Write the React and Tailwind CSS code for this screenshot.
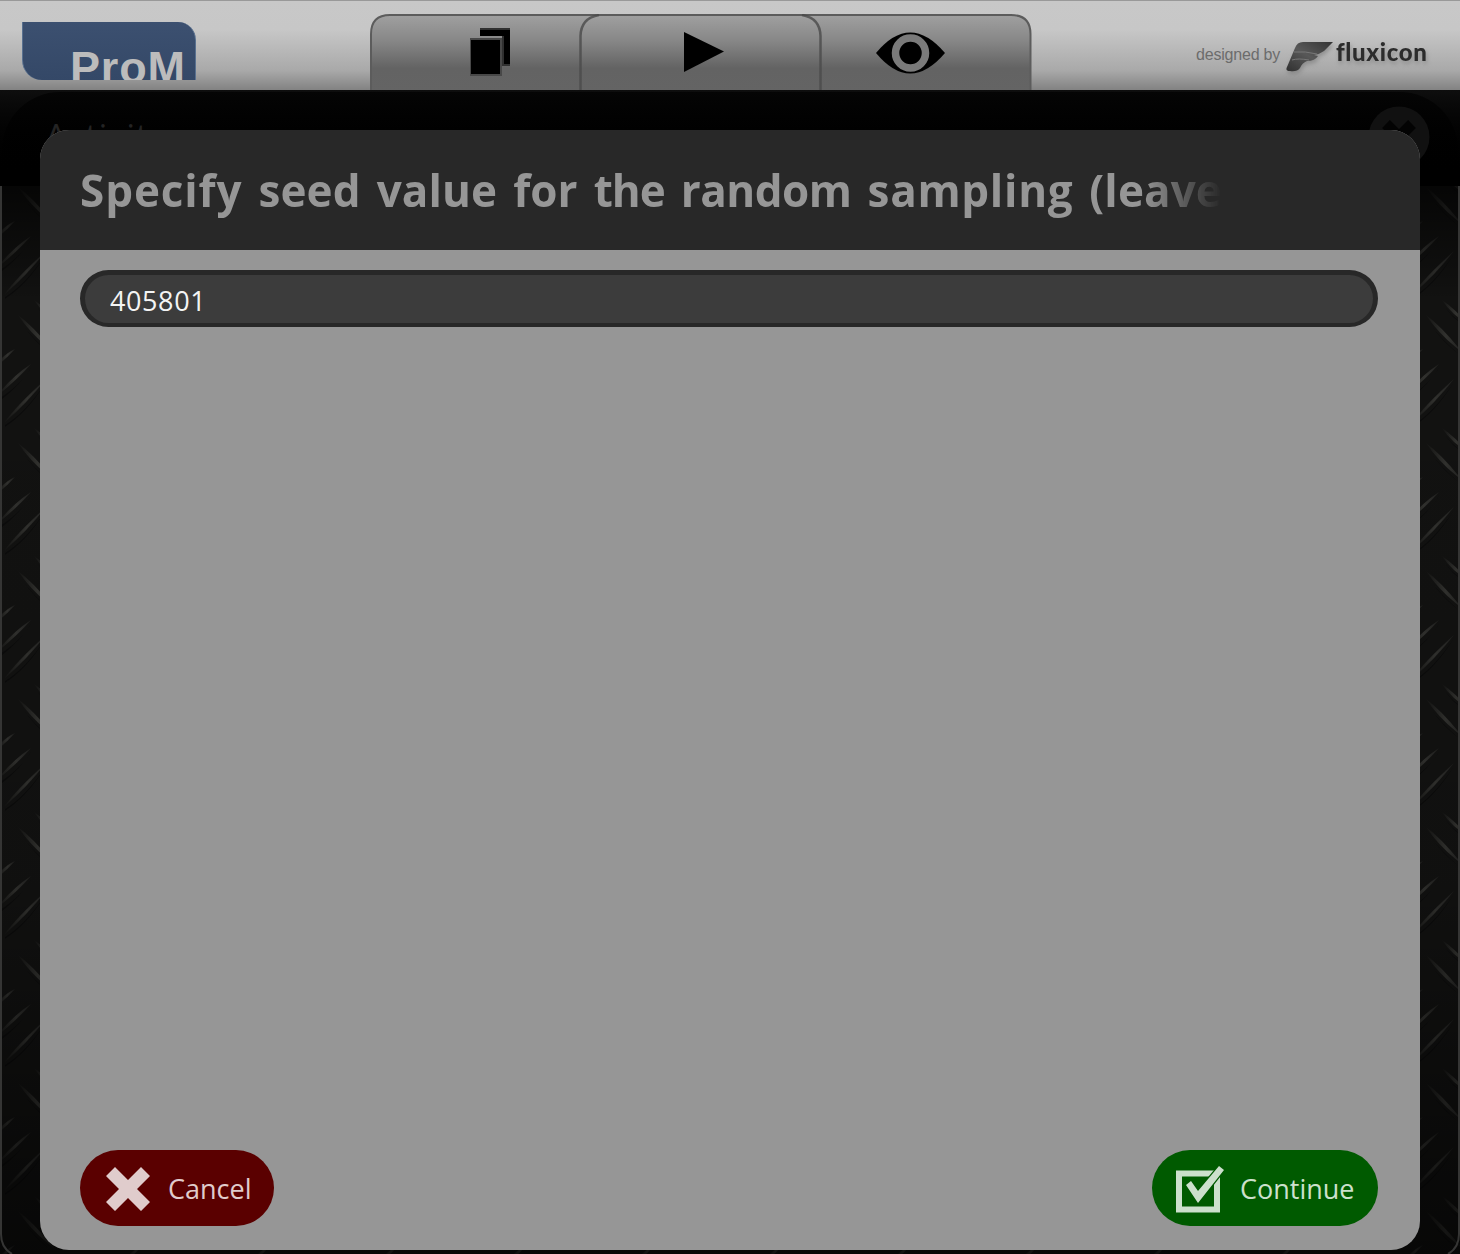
import React from "react";

const UI_FONT = "font-['Open_Sans','Noto_Sans',sans-serif]";

function TreadPlate() {
  return (
    <svg className="absolute inset-0 h-full w-full" aria-hidden="true">
      <defs>
        <linearGradient id="ridge" x1="0" y1="0" x2="1" y2="0">
          <stop offset="0" stopColor="#141413" />
          <stop offset="0.55" stopColor="#32322f" />
          <stop offset="1" stopColor="#20201f" />
        </linearGradient>
        <linearGradient id="shade" x1="0" y1="0" x2="0" y2="1">
          <stop offset="0.14" stopColor="#000" stopOpacity="0.75" />
          <stop offset="0.24" stopColor="#000" stopOpacity="0" />
          <stop offset="0.7" stopColor="#000" stopOpacity="0.1" />
          <stop offset="1" stopColor="#000" stopOpacity="0.6" />
        </linearGradient>
        <pattern id="tread" x="0" y="220" width="128" height="128" patternUnits="userSpaceOnUse">
          <rect width="128" height="128" fill="#121211" />
          <g fill="#0b0b0b">
            <path d="M0 50Q24 34 32 18Q22 36 0 53Z" />
            <path d="M5 77Q26 64 46 34Q28 64 5 79Z" />
            <path d="M34 81Q40 95 60 107Q42 99 34 81Z" />
            <path d="M18 97Q26 113 52 135Q30 119 18 97Z" />
            <path d="M18-31Q26-15 52 7Q30-9 18-31Z" />
          </g>
          <g fill="url(#ridge)">
            <path d="M-2 14Q6 5 15 1Q8 9-2 17Z" />
            <path d="M-2 46Q14 27 31 16Q18 31-2 47Z" />
            <path d="M4 75Q16 58 46 31Q28 54 4 75Z" />
            <path d="M34 80Q47 89 60 104Q44 95 34 80Z" />
            <path d="M18 95Q34 107 54 132Q32 116 18 95Z" />
            <path d="M18-33Q34-21 54 4Q32-12 18-33Z" />
          </g>
        </pattern>
      </defs>
      <rect width="100%" height="100%" fill="url(#tread)" />
      <rect width="100%" height="100%" fill="url(#shade)" />
      <path d="M1 186V1234Q1 1248 12 1254M1459 186V1234Q1459 1248 1448 1254" fill="none" stroke="#353534" strokeWidth="2" />
    </svg>
  );
}

function Tabs() {
  return (
    <svg className="h-[76px] w-[662px] self-end" viewBox="0 0 662 76" role="img" aria-label="Workspace, actions and views">
      <defs>
        <linearGradient id="tab" x1="0" y1="0" x2="0" y2="1">
          <stop offset="0" stopColor="#a0a0a0" />
          <stop offset="0.35" stopColor="#868686" />
          <stop offset="0.7" stopColor="#636363" />
          <stop offset="1" stopColor="#646464" />
        </linearGradient>
      </defs>
      <path d="M1 77V20Q1 1 20 1H641Q660.500 1 660.500 20V77" fill="url(#tab)" stroke="#5c5c5c" strokeWidth="2" />
      <path d="M210.500 77V22Q211 4 229 1M432 1Q450 4 450.500 22V77" fill="none" stroke="#4a4a4a" strokeOpacity=".8" strokeWidth="2.500" />
      <g>
        <path d="M110 14h30v38h-8V22h-22z" fill="#303030" />
        <path d="M110 16h30v34h-6V22h-24z" />
        <path d="M100 24h32v38h-32z" fill="#484848" />
        <path d="M101 26h29v34h-29z" />
        <path d="M314 18L354 37.500L314 58Z" />
        <path d="M506 39Q540-2 575 39Q540 80 506 39Z" />
        <circle cx="540.500" cy="39" r="15" fill="none" stroke="#7a7a7a" strokeWidth="7.500" />
      </g>
    </svg>
  );
}

function Header() {
  return (
    <header className="relative flex h-[90px] border-t border-[#999] bg-[linear-gradient(#c8c8c8_0%,#c7c7c7_32%,#a9a9a9_78%,#828282_100%)]">
      <div className="w-[370px] pl-[22px] pt-[21px]">
        <div className="h-[58px] w-[174px] overflow-hidden rounded-bl-[20px] rounded-tr-[18px] border-x border-[#58708f] bg-linear-to-b from-[#3c5070] to-[#344867]">
          <div className="pl-[47px] pt-[23px] font-['Liberation_Sans',sans-serif] text-[45px] font-bold leading-[45px] tracking-[0.800px] text-[#bcbcbc]">ProM</div>
        </div>
      </div>
      <Tabs />
      <div className="ml-[164px] mt-[39px] flex items-start">
        <span className="mt-[5px] w-[86px] whitespace-nowrap font-['Liberation_Sans',sans-serif] text-[16px] leading-[20px] tracking-[-0.200px] text-[#6c6c6c]">designed by</span>
        <svg className="ml-[3px] h-[36px] w-[51px] drop-shadow-[1px_3px_2px_#77777799]" viewBox="0 0 51 36">
          <defs>
            <linearGradient id="wing" x1="0" y1="1" x2="1" y2="0">
              <stop offset="0" stopColor="#303030" />
              <stop offset="0.5" stopColor="#585858" />
              <stop offset="1" stopColor="#343434" />
            </linearGradient>
          </defs>
          <path d="M10 8Q12 2 18 2H48L39 11Q35 14 29 15L33 16Q30 21 22 21Q17 23 15 28Q12 32 5 31Q0 31 2 27Z" fill="url(#wing)" />
          <path d="M9 12Q20 11 32 14M7 20Q13 18 24 20" fill="none" stroke="#777" strokeWidth="1" />
        </svg>
        <span className="-mt-[3px] font-[Lato,sans-serif] text-[24px] font-black leading-[30px] tracking-[0.650px] text-[#2c2c2c] drop-shadow-[1px_3px_2px_#77777799]">fluxicon</span>
      </div>
    </header>
  );
}

function ActivityBar() {
  return (
    <div className="relative h-[96px] bg-linear-to-b from-[#0e0e0e] to-black pt-[2px]">
      <div className="mx-[2px] flex h-full justify-between rounded-t-[58px] bg-linear-to-b from-[#050505] to-black pl-[43px] pr-[28px]">
        <span className={`${UI_FONT} mt-[22px] text-[35px] leading-[44px] tracking-[0.700px] text-[#242424]`}>Activity</span>
        <svg className="mt-[14px] size-[62px]" viewBox="0 0 62 62">
          <circle cx="31" cy="31" r="30.500" fill="#111" />
          <path d="M18 18L44 44M44 18L18 44" stroke="#030303" strokeWidth="11" />
        </svg>
      </div>
    </div>
  );
}

function Dialog() {
  return (
    <section className={`${UI_FONT} absolute left-[40px] top-[130px] flex h-[1120px] w-[1380px] flex-col overflow-hidden rounded-[29px] bg-[#969696]`}>
      <div className="flex h-[120px] shrink-0 items-center bg-[#282828] pl-[40px]">
        <h1 className="w-[1142px] overflow-hidden whitespace-nowrap text-[44px] font-bold leading-[60px] tracking-[0.100px] text-[#969696] [word-spacing:4.500px] [mask-image:linear-gradient(90deg,#000_93%,transparent_100%)]">
          <span className="tracking-[0.900px]">Specify</span> seed value for <span className="tracking-[-1px]">the</span>{" "}
          <span className="tracking-[-0.500px]">random</span> <span className="tracking-[0.700px]">sampling</span> (leave
        </h1>
      </div>
      <div className="flex flex-1 flex-col justify-between pb-[24px] pl-[40px] pr-[42px] pt-[20px]">
        <input
          defaultValue="405801"
          aria-label="Seed value"
          className="h-[57px] w-full rounded-[29px] border-[5px] border-b-[4px] border-[#282828] bg-[#3c3c3c] pl-[25px] pt-[2px] text-[27px] tracking-[0.600px] text-[#f4f4f4] outline-none"
        />
        <div className="flex justify-between text-[27px]">
          <button className="flex h-[76px] w-[194px] items-center rounded-full bg-[#5a0000] pl-[26px] text-[#e0cccc]">
            <svg className="mt-px h-[46px] w-[44px]" viewBox="0 0 44 46">
              <path d="M9 1L22 14L35 1L44 10L31 23L44 36L35 45L22 32L9 45L0 36L13 23L0 10Z" fill="currentColor" />
            </svg>
            <span className="ml-[18px] mt-[2px]">Cancel</span>
          </button>
          <button className="flex h-[76px] w-[226px] items-center rounded-full bg-[#005a00] pl-[24px] text-[#cce0cc]">
            <svg className="mt-[3px] h-[48px] w-[48px]" viewBox="0 0 48 48">
              <path d="M3 7.500H41V43.500H3Z" fill="none" stroke="currentColor" strokeWidth="6" />
              <path d="M10 19L15 15L22 25L43 0L48 4L22 37Z" fill="currentColor" stroke="#005a00" strokeWidth="2.500" paintOrder="stroke" />
            </svg>
            <span className="ml-[16px] mt-[2px]">Continue</span>
          </button>
        </div>
      </div>
    </section>
  );
}

export default function App() {
  return (
    <main className="relative h-[1254px] w-[1460px] overflow-hidden bg-black">
      <TreadPlate />
      <Header />
      <ActivityBar />
      <Dialog />
    </main>
  );
}
